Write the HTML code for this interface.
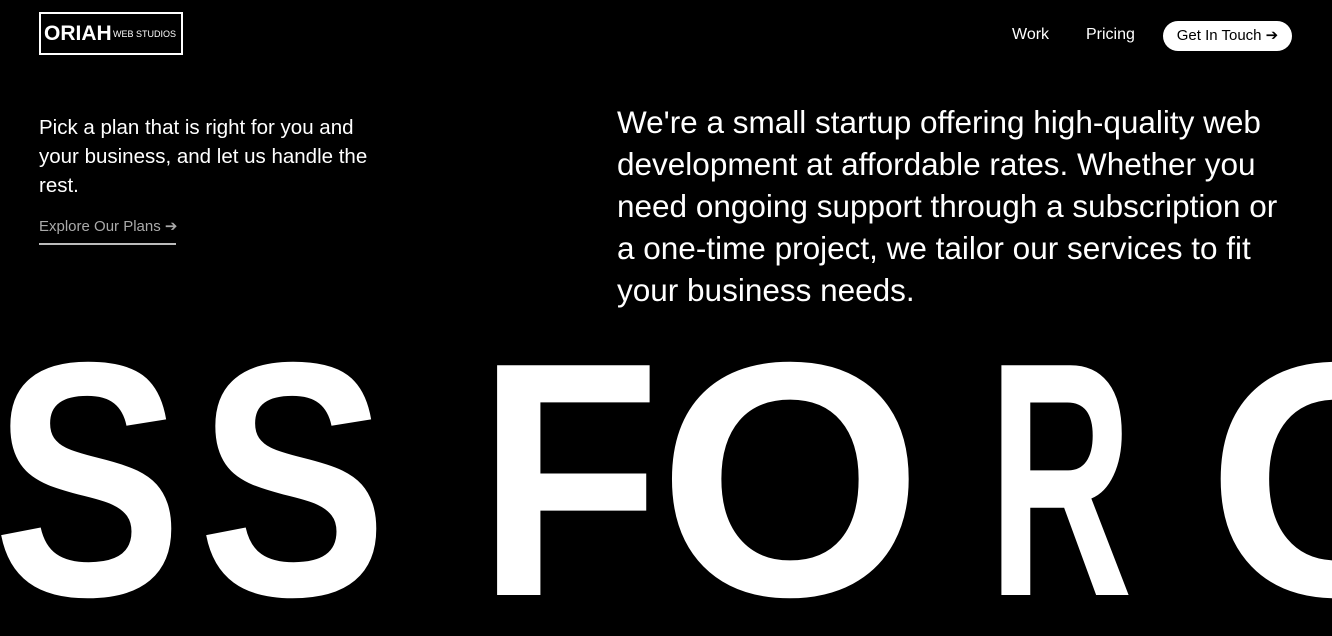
<html><head><style>
html,body{margin:0;overflow:hidden}
body{width:1332px;height:636px;background:#000;color:#fff;font-family:"Liberation Sans",sans-serif;position:relative}
#w{position:absolute;left:0;top:0;width:1332px;height:636px;overflow:hidden}
.a{position:absolute;white-space:nowrap}
.logo{left:39px;top:12px;width:140px;height:39px;border:2px solid #fff;box-sizing:content-box}
.big{font-weight:bold;font-size:334px;line-height:1;top:313px}
</style></head><body><div id="w">
<div class="a logo"><span class="a" style="left:3px;top:8px;font-weight:bold;font-size:21px">ORIAH</span><span class="a" style="left:72px;top:15px;font-size:9px">WEB STUDIOS</span></div>
<div class="a" style="left:1012px;top:26px;font-size:16px">Work</div>
<div class="a" style="left:1086px;top:26px;font-size:16px">Pricing</div>
<div class="a" style="left:1163px;top:21px;width:129px;height:30px;background:#fff;border-radius:15px;color:#000;font-size:15px;line-height:30px;text-align:center">Get In Touch ➔</div>
<div class="a" style="left:39px;top:113px;font-size:20.5px;line-height:29px">Pick a plan that is right for you and<br>your business, and let us handle the<br>rest.</div>
<div class="a" style="left:39px;top:217px;font-size:15px;color:#aaa;padding-bottom:8px;border-bottom:2px solid #bbb;width:137px">Explore Our Plans ➔</div>
<div class="a" style="left:617px;top:101px;font-size:31.5px;line-height:42px">We're a small startup offering high-quality web<br>development at affordable rates. Whether you<br>need ongoing support through a subscription or<br>a one-time project, we tailor our services to fit<br>your business needs.</div>
<div class="a big" style="left:-7px;transform:scaleX(0.85);transform-origin:left">S</div>
<div class="a big" style="left:198px;transform:scaleX(0.85);transform-origin:left">S</div>
<div class="a big" style="left:477px;transform:scaleX(0.9);transform-origin:left">F</div>
<div class="a big" style="left:658px;transform:scaleX(1.02);transform-origin:left">O</div>
<div class="a big" style="left:988px;transform:scaleX(0.6);transform-origin:left">R</div>
<div class="a big" style="left:1207px">O</div>
</div></body></html>
